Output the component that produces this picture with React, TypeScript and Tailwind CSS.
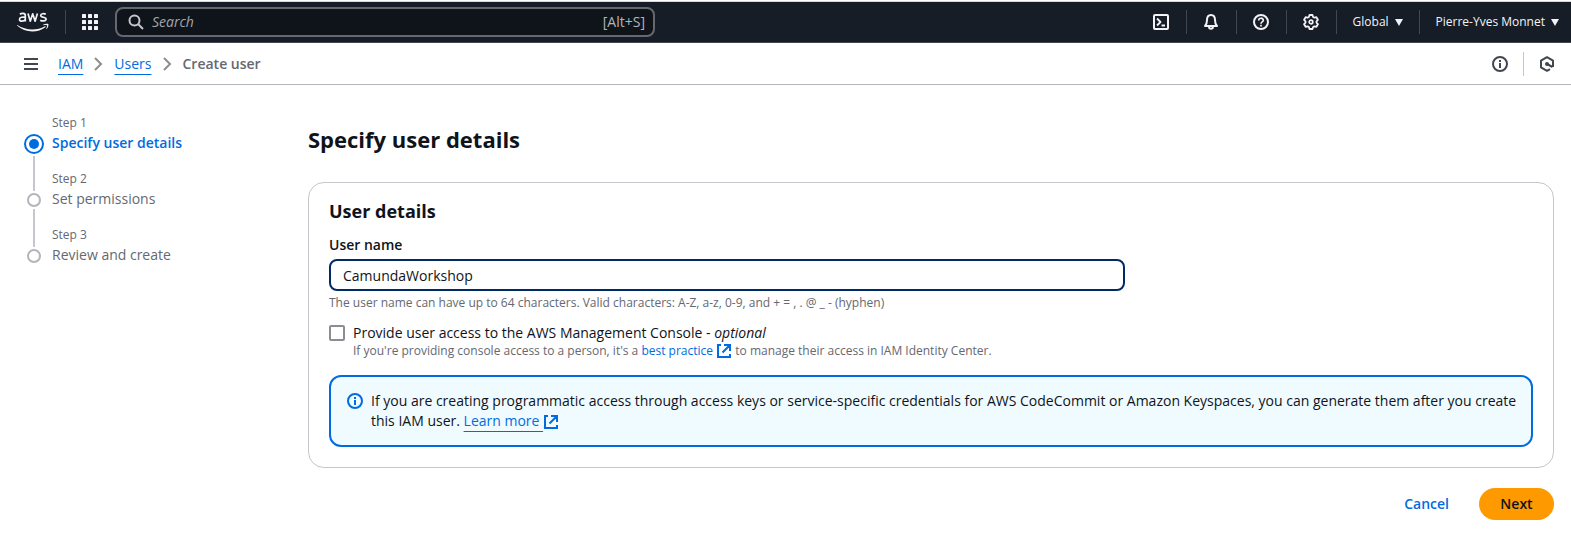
import { useState } from "react";
import type { ReactNode } from "react";

function AwsLogo() {
  return (
    <svg width="32" height="22" viewBox="0 0 32 22" fill="none" aria-hidden="true">
      <g stroke="#f3f3f7" strokeWidth="1.7" strokeLinejoin="round">
        <path d="M2.900 3.200c1.200-.9 5.400-1.600 5.400 1.400v5.800M8.300 6.400c-2.400-.6-5.800-.4-5.800 2 0 2.500 4.300 2.300 5.800.1" />
        <path d="M11 2.600l2.300 7.600 2.400-7.400 2.400 7.400 2.300-7.600" />
        <path d="M28.800 3.300c-1.500-.9-5.100-.9-5.100 1.100 0 2.400 5.400 1.300 5.400 3.700 0 2.300-4 2.200-5.900 1.100" />
      </g>
      <path d="M.3 14c8.500 5.700 19.500 5.800 27.600 1.200.8-.3 1.300.4.500 1C20.600 22.400 7.500 21.800 0 14.600c-.3-.4 0-.8.300-.6z" fill="#f3f3f7" />
      <path d="M26.300 13.600c1.700-1 4.800-.9 5.100-.4.300.5-.2 3.400-1.700 4.700-.3.200-.6 0-.4-.3.400-1 1-2.700.7-3.200-.4-.5-2.500-.3-3.400-.2-.4 0-.5-.4-.3-.6z" fill="#f3f3f7" />
    </svg>
  );
}

function GridIcon() {
  const stops = [0, 6, 12];
  return (
    <svg width="16" height="16" viewBox="0 0 16 16" fill="#f3f3f7" aria-hidden="true">
      {stops.map((y) => stops.map((x) => <rect key={`${x}-${y}`} x={x} y={y} width="4" height="4" rx="0.6" />))}
    </svg>
  );
}

function Icon({ children }: { children: ReactNode }) {
  return (
    <svg className="shrink-0" width="16" height="16" viewBox="0 0 16 16" fill="none" stroke="currentColor" strokeWidth="2" strokeLinejoin="round" aria-hidden="true">
      {children}
    </svg>
  );
}

function InfoIcon() {
  return (
    <Icon>
      <circle cx="8" cy="8" r="7" />
      <path d="M8 7v5M8 4v2" />
    </Icon>
  );
}

function ExternalIcon() {
  return (
    <svg className="inline-block align-[-4px]" width="16" height="16" viewBox="0 0 16 16" fill="none" stroke="currentColor" strokeWidth="2" aria-hidden="true">
      <path d="M5 2H2v12h12v-3M8 2h6v6M6.500 9.500L14 2" />
    </svg>
  );
}

function Divider() {
  return <span className="h-6 w-px bg-[#424650]" />;
}

function HeaderButton({ label, children }: { label: string; children: ReactNode }) {
  return (
    <button type="button" aria-label={label} className="flex h-full w-[49px] items-center justify-center text-[#f3f3f7]">
      {children}
    </button>
  );
}

function MenuButton({ label }: { label: string }) {
  return (
    <button type="button" className="flex h-full items-center gap-1.5 px-4 text-xs font-medium text-[#f3f3f7]">
      {label}
      <svg width="8" height="7" viewBox="0 0 8 7" fill="currentColor" aria-hidden="true">
        <path d="M0 0h8L4 7z" />
      </svg>
    </button>
  );
}

function Chevron() {
  return (
    <svg width="9" height="14" viewBox="0 0 9 14" fill="none" stroke="#8c8c94" strokeWidth="2" aria-hidden="true">
      <path d="M1 1l6 6-6 6" />
    </svg>
  );
}

const steps = ["Specify user details", "Set permissions", "Review and create"];

function Steps() {
  return (
    <nav aria-label="Steps" className="w-[284px] shrink-0 pt-7">
      <ol>
        {steps.map((title, i) => (
          <li key={title} className="flex h-14 gap-2">
            <div className="flex w-5 flex-col items-center">
              {i === 0 ? (
                <span className="mt-[21px] flex size-5 shrink-0 items-center justify-center rounded-full border-2 border-[#006ce0]">
                  <span className="size-2.5 rounded-full bg-[#006ce0]" />
                </span>
              ) : (
                <span className="mt-6 size-3.5 shrink-0 rounded-full border-2 border-[#b4b4bb]" />
              )}
              {i < 2 && <span className="mt-0.5 -mb-[22px] w-0.5 grow bg-[#c6c6cd]" />}
            </div>
            <div>
              <div className="text-xs leading-5 text-[#656871]">Step {i + 1}</div>
              <div className={i === 0 ? "text-sm leading-5 font-semibold text-[#006ce0]" : "text-sm leading-5 text-[#656871]"}>{title}</div>
            </div>
          </li>
        ))}
      </ol>
    </nav>
  );
}

export default function App() {
  const [name, setName] = useState("CamundaWorkshop");
  return (
    <div className="min-h-screen bg-white font-['Open_Sans','Noto_Sans',sans-serif] text-sm leading-5 text-[#0f141a]">
      <header className="mt-px flex h-[42px] items-center border-t border-b border-t-[#d5d7db] border-b-[#424650] bg-[#161d26]">
        <a href="#home" aria-label="AWS home" className="mr-4 ml-[17px]">
          <AwsLogo />
        </a>
        <Divider />
        <button type="button" aria-label="Services" className="mr-[17px] ml-4">
          <GridIcon />
        </button>
        <label className="flex h-[30px] w-[540px] items-center gap-2 rounded-lg border-2 border-[#656871] bg-[#0f141a] pr-2 pl-[11px] text-[#c6c6cd]">
          <Icon>
            <circle cx="6.500" cy="6.500" r="5" />
            <path d="M10 10l5 5" />
          </Icon>
          <input type="search" aria-label="Search" placeholder="Search" className="min-w-0 grow bg-transparent outline-none placeholder:text-[#a4a4ad] placeholder:italic" />
          <span className="text-[#b4b4bb]">[Alt+S]</span>
        </label>
        <div className="ml-auto flex h-full items-center pr-3">
          <HeaderButton label="CloudShell">
            <Icon>
              <rect x="1" y="1" width="14" height="14" rx="1" />
              <path d="M4 4.500L7.500 8 4 11.500M8.500 11.500H12" strokeWidth="1.800" />
            </Icon>
          </HeaderButton>
          <Divider />
          <HeaderButton label="Notifications">
            <Icon>
              <path d="M2 12c1.500-1.500 2-3 2-6 0-3 1.500-5 4-5s4 2 4 5c0 3 .5 4.500 2 6zM6 12.500c0 3 4 3 4 0" />
            </Icon>
          </HeaderButton>
          <Divider />
          <HeaderButton label="Help">
            <Icon>
              <circle cx="8" cy="8" r="7" />
              <path d="M5.700 6.500C5.700 3.500 10.300 3.500 10.300 6.300 10.300 8 8 7.800 8 9.700M8 10.700v1.800" strokeWidth="1.700" />
            </Icon>
          </HeaderButton>
          <Divider />
          <HeaderButton label="Settings">
            <Icon>
              <path d="M6.500 1h3l.6 2 1.300.7 2-.5 1.500 2.600L13.500 7.300v1.400l1.400 1.500-1.500 2.600-2-.5-1.300.7-.6 2h-3l-.6-2-1.300-.7-2 .5-1.500-2.600L2.500 8.700V7.300L1.100 5.800l1.500-2.600 2 .5L5.900 3z" strokeWidth="1.800" />
              <circle cx="8" cy="8" r="1.800" strokeWidth="1.700" />
            </Icon>
          </HeaderButton>
          <Divider />
          <MenuButton label="Global" />
          <Divider />
          <div className="-mr-4 flex h-full">
            <MenuButton label="Pierre-Yves Monnet" />
          </div>
        </div>
      </header>

      <div className="flex h-[42px] items-center border-b border-[#b4b4bb] pr-4 pl-6">
        <button type="button" aria-label="Open navigation" className="text-[#424650]">
          <svg width="14" height="12" viewBox="0 0 14 12" fill="currentColor" aria-hidden="true">
            <path d="M0 0h14v2H0zM0 5h14v2H0zM0 10h14v2H0z" />
          </svg>
        </button>
        <nav aria-label="Breadcrumb" className="ml-5 flex items-center gap-[11px]">
          <a href="#iam" className="text-[#006ce0] underline decoration-1 underline-offset-[5px]">IAM</a>
          <Chevron />
          <a href="#users" className="text-[#006ce0] underline decoration-1 underline-offset-[5px]">Users</a>
          <Chevron />
          <span className="font-semibold text-[#656871]">Create user</span>
        </nav>
        <div className="ml-auto flex items-center gap-[15px] text-[#424650]">
          <button type="button" aria-label="Info"><InfoIcon /></button>
          <span className="h-6 w-px bg-[#c6c6cd]" />
          <button type="button" aria-label="Assistant">
            <Icon>
              <path d="M11 13.100L8 14.800l-6-3.500V4.700L8 1.200l6 3.500v6.200M8 8l5.500 3" />
              <circle cx="8" cy="8" r="2" fill="currentColor" stroke="none" />
            </Icon>
          </button>
        </div>
      </div>

      <div className="flex pr-[17px] pl-6">
        <Steps />
        <main className="min-w-0 grow pt-[39px]">
          <h1 className="text-[22px] leading-[30px] font-bold">Specify user details</h1>
          <section className="mt-7 rounded-2xl border border-[#c6c6cd] px-5 pt-4 pb-5">
            <h2 className="text-lg leading-6 font-bold">User details</h2>
            <div className="mt-3 grid grid-cols-3 gap-5">
              <div className="col-span-2">
                <label htmlFor="user-name" className="block font-semibold">User name</label>
                <input
                  id="user-name"
                  value={name}
                  onChange={(e) => setName(e.target.value)}
                  className="mt-1 block h-8 w-full rounded-lg border-2 border-[#002b66] px-3 outline-none"
                />
                <p className="mt-1 text-xs leading-4 text-[#656871]">
                  The user name can have up to 64 characters. Valid characters: A-Z, a-z, 0-9, and + = , . @ _ - (hyphen)
                </p>
              </div>
            </div>
            <div className="mt-3 flex gap-2">
              <input id="console-access" type="checkbox" className="mt-0.5 size-4 shrink-0 appearance-none rounded-xs border-2 border-[#8c8c94] checked:bg-[#006ce0]" />
              <div>
                <label htmlFor="console-access" className="block">
                  Provide user access to the AWS Management Console - <i>optional</i>
                </label>
                <p className="text-xs leading-4 text-[#656871]">
                  If you're providing console access to a person, it's a{" "}
                  <a href="#best-practice" className="text-[#006ce0]">best practice <ExternalIcon /></a> to manage their access in IAM Identity Center.
                </p>
              </div>
            </div>
            <div className="mt-4 flex gap-2 rounded-xl border-2 border-[#006ce0] bg-[#f0fbff] py-3.5 pr-2 pl-4">
              <span className="mt-0.5 text-[#006ce0]"><InfoIcon /></span>
              <p>
                If you are creating programmatic access through access keys or service-specific credentials for AWS CodeCommit or Amazon Keyspaces, you can generate them after you create this IAM user.{" "}
                <a href="#learn-more" className="text-[#006ce0] underline decoration-1 underline-offset-[5px]">Learn more <ExternalIcon /></a>
              </p>
            </div>
          </section>
          <div className="mt-5 flex items-center justify-end gap-[30px] font-semibold">
            <a href="#cancel" className="text-[#006ce0]">Cancel</a>
            <button type="button" className="h-8 w-[75px] rounded-full bg-[#ff9900]">Next</button>
          </div>
        </main>
      </div>
    </div>
  );
}
